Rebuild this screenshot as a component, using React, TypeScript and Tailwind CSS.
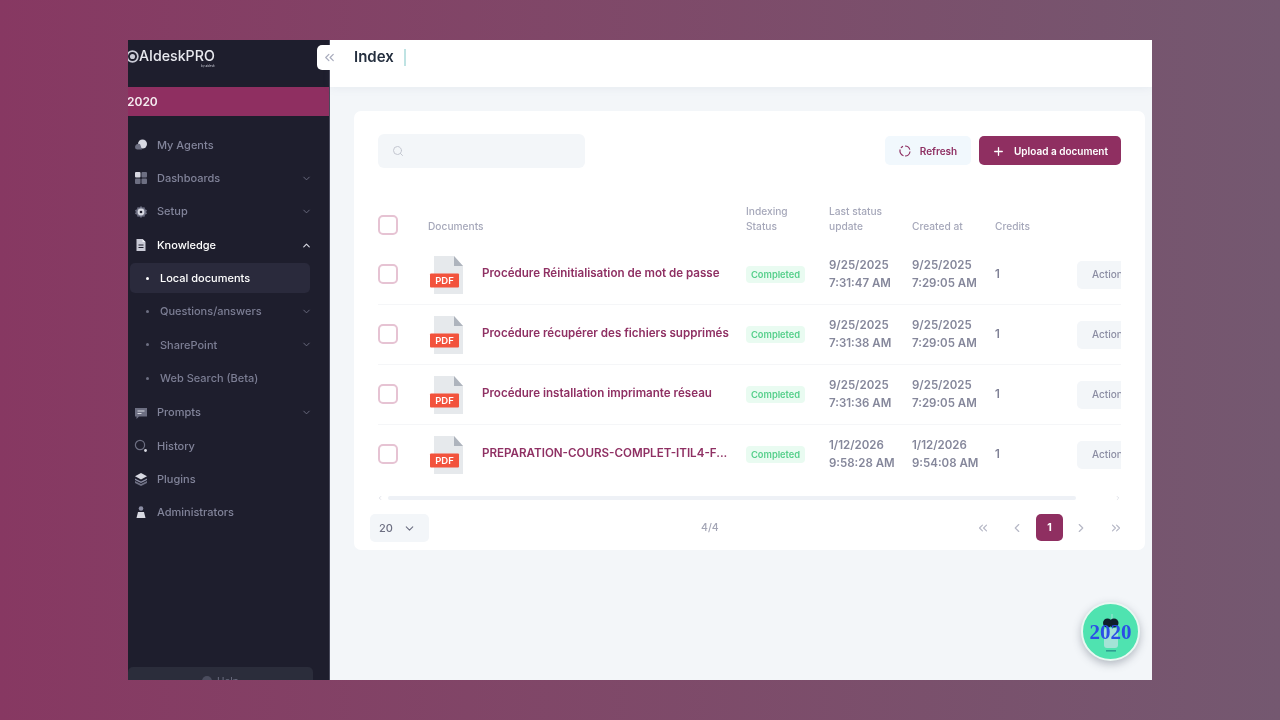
import React from "react";
import { ChevronDown, ChevronUp, ChevronsLeft, ChevronsRight, ChevronLeft, ChevronRight, Plus, Search } from "lucide-react";

const Ic = ({ children }: { children: React.ReactNode }) => (
  <svg width="14" height="14" viewBox="0 0 14 14" className="shrink-0">{children}</svg>
);

const icons: Record<string, React.ReactNode> = {
  agents: (
    <Ic>
      <circle cx="8.5" cy="6" r="4.5" fill="#d8d9e2" />
      <path d="M1 9a3.5 3.5 0 0 1 5-3l2 5.5H3a2.5 2.5 0 0 1-2-2.5z" fill="#6d6f82" />
    </Ic>
  ),
  dash: (
    <Ic>
      <rect x="1" y="1" width="5.5" height="5.5" rx="1" fill="#d8d9e2" />
      <rect x="7.5" y="1" width="5.5" height="5.5" rx="1" fill="#6d6f82" />
      <rect x="1" y="7.5" width="5.5" height="5.5" rx="1" fill="#6d6f82" />
      <rect x="7.5" y="7.5" width="5.5" height="5.5" rx="1" fill="#6d6f82" />
    </Ic>
  ),
  setup: (
    <Ic>
      <path d="M7 1l1.4 1.6 2.1-.3.5 2 2 .9-.8 1.8.8 1.8-2 .9-.5 2-2.1-.3L7 13l-1.4-1.6-2.1.3-.5-2-2-.9L1.8 7 1 5.2l2-.9.5-2 2.1.3z" fill="#6d6f82" />
      <circle cx="7" cy="7" r="3.4" fill="#d8d9e2" />
      <circle cx="7" cy="7" r="1.3" fill="#1e1e2d" />
    </Ic>
  ),
  know: (
    <Ic>
      <path d="M2.5 1h6l3 3v9h-9z" fill="#c9cad6" />
      <path d="M8.5 1l3 3h-3z" fill="#f2f2f6" />
      <path d="M4.5 7h5M4.5 9.5h5" stroke="#1e1e2d" strokeWidth="1" />
    </Ic>
  ),
  prompts: (
    <Ic>
      <path d="M1 2h12v8.5H5L2.5 13v-2.5H1z" fill="#6d6f82" />
      <path d="M3.5 5h7M3.5 7.5h4" stroke="#d8d9e2" strokeWidth="1.1" />
    </Ic>
  ),
  history: (
    <Ic>
      <circle cx="6" cy="6" r="4.6" fill="none" stroke="#6d6f82" strokeWidth="1.2" />
      <circle cx="11.5" cy="11.5" r="1.4" fill="#d8d9e2" />
    </Ic>
  ),
  plugins: (
    <Ic>
      <path d="M1 9l6 3 6-3v2l-6 3-6-3z" fill="#6d6f82" />
      <path d="M1 6.5l6 3 6-3v1.6l-6 3-6-3z" fill="#8b8da3" />
      <path d="M7 1l6 3.2L7 7.4 1 4.2z" fill="#d8d9e2" />
    </Ic>
  ),
  admin: (
    <Ic>
      <circle cx="7" cy="3.5" r="2.3" fill="#8b8da3" />
      <path d="M2.5 13l1.5-6h6l1.5 6z" fill="#d8d9e2" />
    </Ic>
  ),
};

type NavItem = { label: string; icon?: string; chevron?: "down" | "up"; active?: boolean; selected?: boolean; className?: string };

const nav: NavItem[] = [
  { label: "My Agents", icon: "agents" },
  { label: "Dashboards", icon: "dash", chevron: "down" },
  { label: "Setup", icon: "setup", chevron: "down" },
  { label: "Knowledge", icon: "know", chevron: "up", active: true },
  { label: "Local documents", selected: true },
  { label: "Questions/answers", chevron: "down" },
  { label: "SharePoint", chevron: "down" },
  { label: "Web Search (Beta)" },
  { label: "Prompts", icon: "prompts", chevron: "down", className: "mt-[1px]" },
  { label: "History", icon: "history" },
  { label: "Plugins", icon: "plugins" },
  { label: "Administrators", icon: "admin" },
];

const rows = [
  { name: "Procédure Réinitialisation de mot de passe", u1: "9/25/2025", u2: "7:31:47 AM", c1: "9/25/2025", c2: "7:29:05 AM" },
  { name: "Procédure récupérer des fichiers supprimés", u1: "9/25/2025", u2: "7:31:38 AM", c1: "9/25/2025", c2: "7:29:05 AM" },
  { name: "Procédure installation imprimante réseau", u1: "9/25/2025", u2: "7:31:36 AM", c1: "9/25/2025", c2: "7:29:05 AM" },
  { name: "PREPARATION-COURS-COMPLET-ITIL4-F...", u1: "1/12/2026", u2: "9:58:28 AM", c1: "1/12/2026", c2: "9:54:08 AM" },
];

const PdfIcon = () => (
  <svg width="36" height="40" viewBox="0 0 36 40" className="shrink-0">
    <path d="M6 1h20l9 10v28H6z" fill="#e6e9ec" />
    <path d="M26 1l9 10h-9z" fill="#aeb4bd" />
    <rect x="2" y="18.5" width="29" height="14" rx="1" fill="#f2533d" />
    <text x="16.5" y="29" textAnchor="middle" fontSize="9.5" fontWeight="600" fill="#fff" fontFamily="Inter, sans-serif">PDF</text>
  </svg>
);

const Checkbox = () => <div className="w-5 h-5 rounded-[5px] border-2 border-[#e6c3d3] bg-white" />;

export default function App() {
  return (
    <div className="w-[1280px] h-[720px] flex items-center justify-center bg-linear-to-r from-[#873862] to-[#745870] font-['Inter',sans-serif] overflow-hidden">
      <div className="relative w-[1024px] h-[640px] flex overflow-hidden bg-[#f3f6f9] blur-[0.7px]">
        {/* Sidebar */}
        <aside className="w-[202px] shrink-0 bg-[#1e1e2d] flex flex-col overflow-hidden border-r border-[#4a4b5c]">
          <div className="h-[47px] shrink-0 flex items-start pt-[7px]">
            <div className="flex items-center -ml-[3px]">
              <svg width="15" height="15" viewBox="0 0 14 14">
                <circle cx="7" cy="7" r="5" fill="none" stroke="#c9cad6" strokeWidth="1.6" />
                <circle cx="7" cy="7" r="2.4" fill="#c9cad6" />
              </svg>
              <div className="relative text-[#e9eaf0] text-[14.2px] font-medium leading-[18px] -ml-[1px]">
                AIdeskPRO
                <span className="absolute right-0 top-[18px] text-[3px] leading-none text-[#b9bac6]">by aidesk</span>
              </div>
            </div>
          </div>
          <div className="h-[29px] shrink-0 bg-[#8f2f61] flex items-center text-white/90 text-[12px] font-semibold">
            <span className="-ml-[1px]">2020</span>
          </div>
          <nav className="pt-[12.5px] flex flex-col">
            {nav.map((n) => (
              <div key={n.label} className={`relative h-[33.3px] shrink-0 flex items-center ${n.className ?? ""}`}>
                {n.selected && <div className="absolute left-[2px] top-[1px] w-[180px] h-[30px] rounded-[5px] bg-[#2a2a3c]" />}
                {n.icon ? (
                  <div className="relative flex items-center pl-[6px] gap-[9px]">
                    {icons[n.icon]}
                    <span className={`text-[11px] font-medium ${n.active ? "text-white" : "text-[#82849a]"}`}>{n.label}</span>
                  </div>
                ) : (
                  <div className="relative flex items-center pl-[18px] gap-[11px]">
                    <span className={`w-[3px] h-[3px] rounded-full ${n.selected ? "bg-white" : "bg-[#6d6f82]"}`} />
                    <span className={`text-[11px] font-medium ${n.selected ? "text-white" : "text-[#7c7e94]"}`}>{n.label}</span>
                  </div>
                )}
                {n.chevron === "down" && <ChevronDown size={11} strokeWidth={2} className="absolute left-[173px] text-[#6d6f82]" />}
                {n.chevron === "up" && <ChevronUp size={11} strokeWidth={2.5} className="absolute left-[173px] text-[#d8d9e2]" />}
              </div>
            ))}
          </nav>
          <div className="mt-auto h-[13px] w-[185px] rounded-t-[5px] bg-[#2b2d3b] flex justify-center items-start pt-[9px] overflow-hidden gap-[5px] shrink-0">
            <span className="w-[10px] h-[10px] rounded-full bg-[#4b4d5e]" />
            <span className="text-[10px] leading-none text-[#6d6f82]">Help</span>
          </div>
        </aside>

        {/* Collapse toggle */}
        <div className="absolute left-[189px] top-[5px] w-[24px] h-[25px] rounded-[5px] bg-white flex items-center justify-center">
          <ChevronsLeft size={15} className="text-[#a9acbd]" />
        </div>

        {/* Main */}
        <main className="flex-1 flex flex-col min-w-0">
          <header className="h-[47px] shrink-0 bg-white flex items-center pl-[24px] pb-[12px] shadow-[0_2px_8px_rgba(120,130,150,0.08)]">
            <span className="text-[#252f3f] text-[15px] font-semibold">Index</span>
            <span className="ml-[10px] w-[2px] h-[17px] bg-[#bfe3e3]" />
          </header>

          <div className="flex-1 pl-[24px] pr-[7px] pt-[24px]">
            <section className="h-[439px] bg-white rounded-[7px] pt-[23px] pl-[24px] pr-[24px] overflow-hidden">
              <div className="flex items-start h-[34px]">
                <div className="w-[207px] h-[34px] rounded-[6px] bg-[#f3f6f9] flex items-center pl-[14px]">
                  <Search size={12} className="text-[#c3c7d0]" />
                </div>
                <button className="ml-auto mt-[2px] pt-[1px] w-[86px] h-[29px] rounded-[5px] bg-[#f1f8fd] flex items-center justify-center gap-[9px] text-[#8f3063] text-[10px] font-semibold">
                  <svg width="12" height="12" viewBox="0 0 12 12">
                    <path d="M6 1a5 5 0 0 1 4.8 3.6M11 6.5A5 5 0 0 1 6 11M4.5 10.8A5 5 0 0 1 1.2 4.5M2 3a5 5 0 0 1 2-1.6" fill="none" stroke="#8f3063" strokeWidth="1.2" />
                  </svg>
                  Refresh
                </button>
                <button className="ml-[8px] mt-[2px] pt-[1px] w-[142px] h-[29px] rounded-[5px] bg-[#8f2f61] flex items-center justify-center gap-[9px] text-white text-[10px] font-semibold">
                  <Plus size={13} strokeWidth={2.4} />
                  Upload a document
                </button>
              </div>

              <div className="mt-[32px] grid grid-cols-[50px_318px_83px_83px_83px_82px_44px] h-[45px] items-end text-[10.2px] leading-[15px] font-medium text-[#a6a8ba] overflow-hidden">
                <div className="pb-[10px]"><Checkbox /></div>
                <div className="pb-[11px]">Documents</div>
                <div className="pb-[11px]">Indexing<br />Status</div>
                <div className="pb-[11px]">Last status<br />update</div>
                <div className="pb-[11px]">Created at</div>
                <div className="pb-[11px]">Credits</div>
                <div />
              </div>

              {rows.map((r, i) => (
                <div key={r.name} className={`grid grid-cols-[50px_318px_83px_83px_83px_82px_44px] h-[60px] items-center overflow-hidden border-b ${i < 3 ? "border-[#f5f6f8]" : "border-transparent"}`}>
                  <div className="-mt-[2px]"><Checkbox /></div>
                  <div className="flex items-center gap-[18px]">
                    <PdfIcon />
                    <span className="text-[11.6px] font-semibold text-[#8f3063] whitespace-nowrap -mt-[1px]">{r.name}</span>
                  </div>
                  <div className="flex items-center">
                    <span className="h-[17px] px-[5px] rounded-[4px] bg-[#e9fbf1] text-[#56cf8b] text-[9.3px] font-semibold leading-[17px]">Completed</span>
                  </div>
                  <div className="-mt-[1px] text-[11.5px] leading-[18px] font-semibold text-[#85879b] whitespace-nowrap">{r.u1}<br />{r.u2}</div>
                  <div className="-mt-[1px] text-[11.5px] leading-[18px] font-semibold text-[#85879b] whitespace-nowrap">{r.c1}<br />{r.c2}</div>
                  <div className="text-[11.5px] font-semibold text-[#7f8196]">1</div>
                  <div className="h-[28px] w-[60px] rounded-[5px] bg-[#f3f6f9] flex items-center pl-[15px] text-[10px] font-medium text-[#8b8da3]">Action</div>
                </div>
              ))}

              <div className="mt-[10px] flex items-center h-[5px] text-[#d4d7e0]">
                <ChevronLeft size={6} strokeWidth={3} className="-ml-[1px] mr-[5px]" />
                <div className="w-[688px] h-[4px] rounded-full bg-[#eef1f6]" />
                <ChevronRight size={6} strokeWidth={3} className="ml-auto" />
              </div>

              <div className="mt-[14px] -ml-[8px] flex items-center h-[28px]">
                <div className="w-[59px] h-[28px] rounded-[5px] bg-[#f3f6f9] flex items-center pl-[9px] gap-[10px] text-[11px] font-medium text-[#6d6f82]">
                  20
                  <ChevronDown size={13} className="text-[#6d6f82]" />
                </div>
                <span className="ml-[272px] text-[10.5px] font-medium text-[#a3a5b5]">4/4</span>
                <div className="ml-auto flex items-start h-[28px] text-[#b6b8c6] -mr-[8px]">
                  <div className="w-[27px] h-[27px] flex items-center justify-center"><ChevronsLeft size={14} /></div>
                  <div className="ml-[7px] w-[27px] h-[27px] flex items-center justify-center"><ChevronLeft size={14} /></div>
                  <div className="ml-[6px] w-[27px] h-[27px] rounded-[5px] bg-[#8f2f61] flex items-center justify-center text-white text-[10.5px] font-bold">1</div>
                  <div className="ml-[4px] w-[27px] h-[27px] flex items-center justify-center"><ChevronRight size={14} /></div>
                  <div className="ml-[8px] w-[27px] h-[27px] flex items-center justify-center"><ChevronsRight size={14} /></div>
                </div>
              </div>
            </section>
          </div>
        </main>

        {/* Floating chat avatar */}
        <div className="absolute left-[953px] top-[562px] w-[59px] h-[59px] rounded-full bg-[#4fe3b0] border-2 border-[#e9f8f2] shadow-[0_3px_8px_rgba(60,70,90,0.35)] flex items-center justify-center overflow-hidden">
          <svg width="24" height="42" viewBox="0 0 24 42" className="absolute left-[16px] top-[10px]">
            <path d="M13 0v6" stroke="#a4e3d6" strokeWidth="1" />
            <rect x="5" y="14" width="14" height="20" rx="3" fill="#a4e3d6" />
            <circle cx="8.5" cy="9" r="4.5" fill="#0f1f2c" />
            <circle cx="15" cy="9" r="4.5" fill="#0f1f2c" />
            <rect x="7" y="36" width="10" height="1.6" fill="#2d9e92" />
          </svg>
          <span className="relative mt-[1px] text-[#2b4fe6] text-[21px] font-bold font-['Liberation_Serif',serif] leading-none">2020</span>
        </div>
      </div>
    </div>
  );
}
